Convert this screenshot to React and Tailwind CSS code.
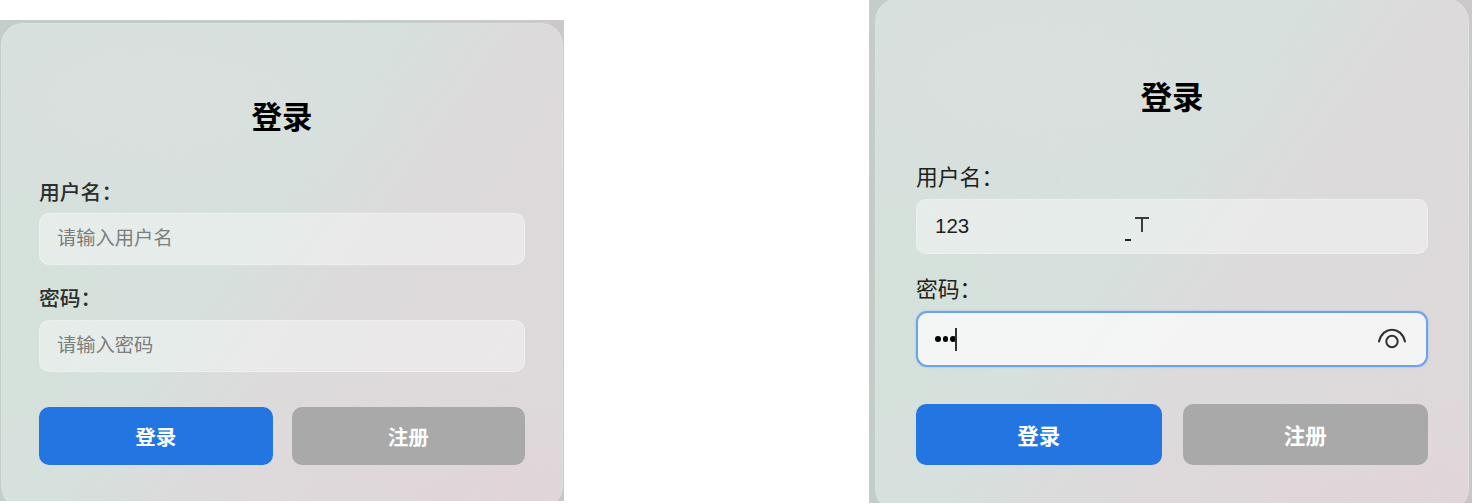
import React from "react";

const FONT = "font-['Liberation_Sans','Noto_Sans_CJK_SC',sans-serif]";
const SURFACE =
  "bg-[radial-gradient(ellipse_22%_28%_at_0%_58%,#d4e2da_0%,transparent_100%),radial-gradient(ellipse_50%_25%_at_90%_100%,#e1d5d9_0%,transparent_100%),radial-gradient(ellipse_45%_25%_at_30%_16%,#dae0de_0%,transparent_100%),linear-gradient(126deg,#d7e0dd_0%,#d6e0dc_44%,#dddadb_60%,#ded9da_100%)]";
const FRAME = "overflow-hidden bg-[linear-gradient(100deg,#c4cdc9_0%,#c3cdc8_55%,#cbc9c9_85%,#cac6c7_100%)]";

function LeftForm() {
  return (
    <section className={`mt-5 h-[481px] w-[564px] shrink-0 pt-[3px] ${FRAME}`}>
      <form className={`mx-px flex h-[485px] flex-col rounded-[22px] border border-white/15 px-[37px] ${SURFACE}`}>
        <h1 className="mt-[75px] text-center text-[30.5px] leading-9 font-bold text-black">登录</h1>
        <label className="mt-[44px] h-[34px] text-[20.8px] leading-7 font-medium text-[#2b2f2e]">用户名：</label>
        <div className="flex h-[52px] items-center rounded-[10px] border border-white/25 bg-white/40 px-[17px] pt-px text-[19.3px] text-[#7b7e7d]">
          请输入用户名
        </div>
        <label className="mt-[20px] h-[35px] text-[20.8px] leading-7 font-medium text-[#2b2f2e]">密码：</label>
        <div className="flex h-[52px] items-center rounded-[10px] border border-white/25 bg-white/40 px-[17px] pt-px text-[19.3px] text-[#7b7e7d]">
          请输入密码
        </div>
        <div className="mt-[35px] grid h-[58px] grid-cols-2 gap-[19px] text-[20.5px] font-bold text-white">
          <button type="button" className="rounded-[10px] bg-[#2375e2] pt-1">登录</button>
          <button type="button" className="rounded-[10px] bg-[#a9a9a9] pt-1">注册</button>
        </div>
      </form>
    </section>
  );
}

function RightForm() {
  return (
    <section className={`h-[503px] w-[603px] shrink-0 ${FRAME}`}>
      <form className={`-mt-[2px] ml-[6px] flex h-[514px] w-[594px] flex-col rounded-[24px] border border-white/15 px-[40px] ${SURFACE}`}>
        <h1 className="mt-[81px] text-center text-[31.5px] leading-9 font-bold text-black">登录</h1>
        <label className="mt-[47px] h-[36px] text-[21.8px] leading-[29px] text-[#1d2120]">用户名：</label>
        <div className="relative flex h-[55px] items-center rounded-[10px] border border-white/25 bg-white/40 px-[18px] text-[20.5px] text-[#202322]">
          123
          <svg className="absolute top-[16px] left-[207px]" width="26" height="26" fill="none" stroke="#393d3b" strokeWidth="2">
            <path d="M11 2h14M18 2v14" />
            <path d="M1 24h6" stroke="#202322" />
          </svg>
        </div>
        <label className="mt-[21px] h-[36px] text-[21.8px] leading-[29px] text-[#1d2120]">密码：</label>
        <div className="flex h-[56px] items-center rounded-[11px] border-2 border-[#6ca2ee] bg-white/70 pr-[20px] pl-[17px] shadow-[0_0_2px_#83b9ef]">
          <span className="flex gap-[2px]">
            <i className="size-[5.5px] rounded-full bg-black" />
            <i className="size-[5.5px] rounded-full bg-black" />
            <i className="size-[5.5px] rounded-full bg-black" />
          </span>
          <i className="-ml-px h-[23px] w-[2px] bg-[#303030]" />
          <svg className="ml-auto" width="28" height="24" fill="none" stroke="#303131" strokeWidth="2" strokeLinecap="round">
            <path d="M1 14.500C4.500 -1.300 23.500 -1.300 27 14.500" />
            <circle cx="14" cy="14.500" r="5.700" />
          </svg>
        </div>
        <div className="mt-[37px] grid h-[61px] grid-cols-2 gap-[21px] text-[21.5px] font-bold text-white">
          <button type="button" className="rounded-[10px] bg-[#2375e2] pt-1.5">登录</button>
          <button type="button" className="rounded-[10px] bg-[#a9a9a9] pt-1.5">注册</button>
        </div>
      </form>
    </section>
  );
}

export default function App() {
  return (
    <main lang="zh-CN" className={`flex h-[504px] w-[1473px] items-start justify-between overflow-hidden bg-white pr-px ${FONT}`}>
      <LeftForm />
      <RightForm />
    </main>
  );
}
